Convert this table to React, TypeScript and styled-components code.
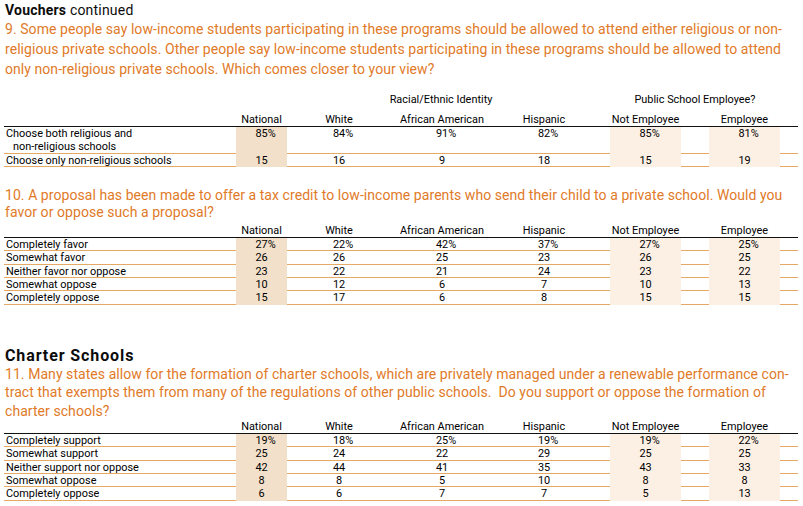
import React from "react";
import styled, { createGlobalStyle } from "styled-components";

const GlobalStyle = createGlobalStyle`
  html, body { margin: 0; padding: 0; background: #ffffff; }
  body { font-family: Roboto, "Liberation Sans", Arial, sans-serif; color: #111; }
`;

const COLS = "232px 51px 104px 102px 102px 15px 71px 28px 71px 18px";
const ORANGE_LINE = "#e6a865";
const NATIONAL_SHADE = "#f3e0cb";
const EMP_SHADE = "#fcf0e5";

const Page = styled.div`
  width: 803px;
  padding: 1px 5px 0 4px;
  box-sizing: border-box;
`;

const SectionTitle = styled.div<{ $size: number; $top: number; $spacing: number }>`
  font-weight: 700;
  font-size: ${(p) => p.$size}px;
  letter-spacing: ${(p) => p.$spacing}px;
  line-height: 18px;
  margin-top: ${(p) => p.$top}px;
  padding-left: 1px;
  color: #0c0c0c;
  white-space: nowrap;
`;

const Light = styled.span`
  font-weight: 400;
  letter-spacing: 0.2px;
`;

const Question = styled.div<{ $lh: number; $top?: number }>`
  color: #df7a28;
  font-size: 14px;
  letter-spacing: 0.06px;
  line-height: ${(p) => p.$lh}px;
  margin-top: ${(p) => p.$top || 0}px;
  padding-left: 1px;
  white-space: nowrap;
`;

const Table = styled.div<{ $top: number }>`
  display: flex;
  flex-direction: column;
  margin-top: ${(p) => p.$top}px;
  font-size: 10.9px;
  font-weight: 400;
  color: #000;
`;

const GroupRow = styled.div`
  display: grid;
  grid-template-columns: ${COLS};
  height: 14px;
  line-height: 14px;
  margin-bottom: 6px;
`;

const GroupLabel = styled.div<{ $span: string }>`
  grid-column: ${(p) => p.$span};
  text-align: center;
  white-space: nowrap;
`;

const HeadRow = styled.div`
  display: grid;
  grid-template-columns: ${COLS};
  height: 14px;
  line-height: 14px;
  box-sizing: border-box;
  border-bottom: 1.5px solid #111;
`;

const DataRow = styled.div<{ $lines: number }>`
  display: grid;
  grid-template-columns: ${COLS};
  height: ${(p) => p.$lines * 13.33}px;
  line-height: 13.33px;
  box-sizing: border-box;
  border-bottom: 1px solid ${ORANGE_LINE};
`;

const Label = styled.div`
  padding-left: 2px;
  white-space: nowrap;
`;

const Indent = styled.span`
  padding-left: 7px;
`;

const Cell = styled.div<{ $shade?: string }>`
  text-align: center;
  white-space: nowrap;
  background: ${(p) => p.$shade || "transparent"};
`;

const Pct = styled.span`
  display: inline-block;
  width: 0;
`;

type Row = { label: React.ReactNode; lines?: number; values: string[] };

const headers = ["National", "White", "African American", "Hispanic", "Not Employee", "Employee"];

const Value = ({ v }: { v: string }) =>
  v.endsWith("%") ? (
    <>
      {v.slice(0, -1)}
      <Pct>%</Pct>
    </>
  ) : (
    <>{v}</>
  );

const CellsFor = ({ values }: { values: string[] }) => (
  <>
    <Cell $shade={NATIONAL_SHADE}>
      <Value v={values[0]} />
    </Cell>
    <Cell>
      <Value v={values[1]} />
    </Cell>
    <Cell>
      <Value v={values[2]} />
    </Cell>
    <Cell>
      <Value v={values[3]} />
    </Cell>
    <div />
    <Cell $shade={EMP_SHADE}>
      <Value v={values[4]} />
    </Cell>
    <div />
    <Cell $shade={EMP_SHADE}>
      <Value v={values[5]} />
    </Cell>
    <div />
  </>
);

const HeaderCells = () => (
  <>
    <div />
    <Cell>{headers[0]}</Cell>
    <Cell>{headers[1]}</Cell>
    <Cell>{headers[2]}</Cell>
    <Cell>{headers[3]}</Cell>
    <div />
    <Cell>{headers[4]}</Cell>
    <div />
    <Cell>{headers[5]}</Cell>
    <div />
  </>
);

const DataTable = ({ rows, top, groups }: { rows: Row[]; top: number; groups?: boolean }) => (
  <Table $top={top}>
    {groups && (
      <GroupRow>
        <GroupLabel $span="3 / 6">Racial/Ethnic Identity</GroupLabel>
        <GroupLabel $span="7 / 10">Public School Employee?</GroupLabel>
      </GroupRow>
    )}
    <HeadRow>
      <HeaderCells />
    </HeadRow>
    {rows.map((r, i) => (
      <DataRow key={i} $lines={r.lines || 1}>
        <Label>{r.label}</Label>
        <CellsFor values={r.values} />
      </DataRow>
    ))}
  </Table>
);

const q9Rows: Row[] = [
  {
    label: (
      <>
        Choose both religious and
        <br />
        <Indent>non-religious schools</Indent>
      </>
    ),
    lines: 2,
    values: ["85%", "84%", "91%", "82%", "85%", "81%"],
  },
  { label: "Choose only non-religious schools", values: ["15", "16", "9", "18", "15", "19"] },
];

const q10Rows: Row[] = [
  { label: "Completely favor", values: ["27%", "22%", "42%", "37%", "27%", "25%"] },
  { label: "Somewhat favor", values: ["26", "26", "25", "23", "26", "25"] },
  { label: "Neither favor nor oppose", values: ["23", "22", "21", "24", "23", "22"] },
  { label: "Somewhat oppose", values: ["10", "12", "6", "7", "10", "13"] },
  { label: "Completely oppose", values: ["15", "17", "6", "8", "15", "15"] },
];

const q11Rows: Row[] = [
  { label: "Completely support", values: ["19%", "18%", "25%", "19%", "19%", "22%"] },
  { label: "Somewhat support", values: ["25", "24", "22", "29", "25", "25"] },
  { label: "Neither support nor oppose", values: ["42", "44", "41", "35", "43", "33"] },
  { label: "Somewhat oppose", values: ["8", "8", "5", "10", "8", "8"] },
  { label: "Completely oppose", values: ["6", "6", "7", "7", "5", "13"] },
];

export default function App() {
  return (
    <>
      <GlobalStyle />
      <Page>
        <SectionTitle $size={14} $top={0} $spacing={0.2}>
          Vouchers <Light>continued</Light>
        </SectionTitle>
        <Question $lh={20}>
          9. Some people say low-income students participating in these programs should be allowed to attend either religious or non-
          <br />
          religious private schools. Other people say low-income students participating in these programs should be allowed to attend
          <br />
          only non-religious private schools. Which comes closer to your view?
        </Question>
        <DataTable rows={q9Rows} top={14} groups />

        <Question $lh={17} $top={20}>
          10. A proposal has been made to offer a tax credit to low-income parents who send their child to a private school. Would you
          <br />
          favor or oppose such a proposal?
        </Question>
        <DataTable rows={q10Rows} top={3} />

        <SectionTitle $size={16} $top={42} $spacing={0.9}>
          Charter Schools
        </SectionTitle>
        <Question $lh={18.5}>
          11. Many states allow for the formation of charter schools, which are privately managed under a renewable performance con-
          <br />
          tract that exempts them from many of the regulations of other public schools.&nbsp; Do you support or oppose the formation of
          <br />
          charter schools?
        </Question>
        <DataTable rows={q11Rows} top={0} />
      </Page>
    </>
  );
}
